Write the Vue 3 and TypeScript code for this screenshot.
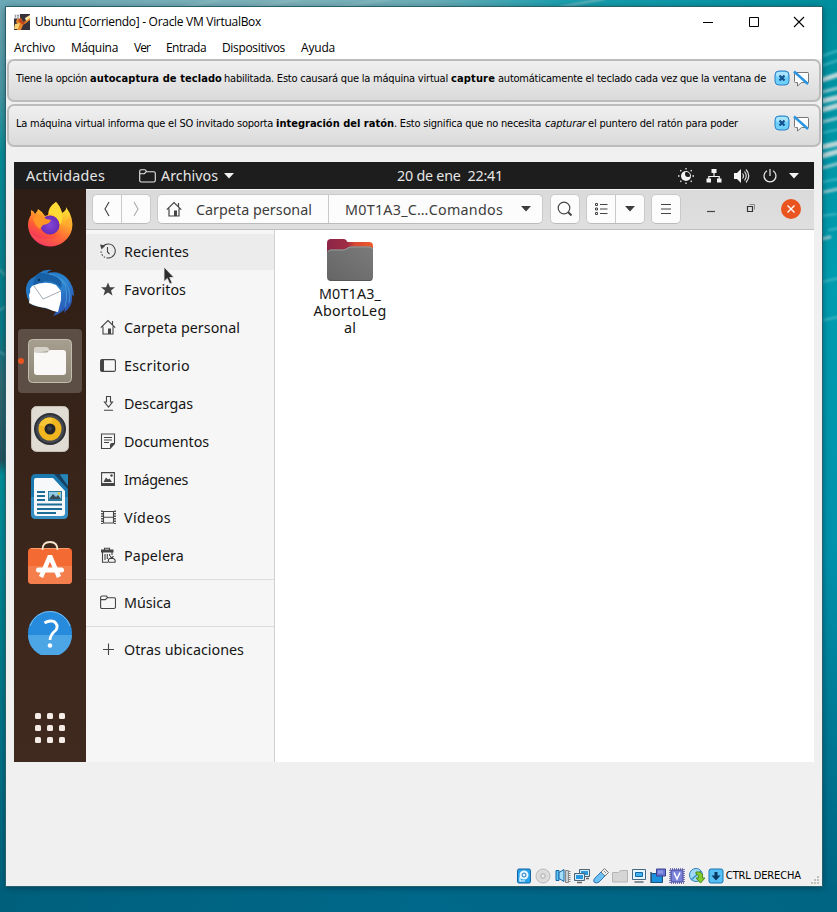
<script setup lang="ts">
import type { Directive } from 'vue'

// Spreads the letters of a label evenly over its nominal width.
const vFit: Directive<HTMLElement, number> = {
  mounted(el, binding) {
    const natural = el.getBoundingClientRect().width
    const count = (el.textContent ?? '').length
    if (count > 0) el.style.letterSpacing = `${(binding.value - natural) / count}px`
    el.style.width = `${binding.value}px`
  },
}

interface Label { text: string; width: number }
interface Segment extends Label { kind?: 'bold' | 'ital'; gap: number }
interface Place extends Label { icon: string; active?: boolean }

const menus: Label[] = [
  { text: 'Archivo', width: 41 },
  { text: 'Máquina', width: 47 },
  { text: 'Ver', width: 16 },
  { text: 'Entrada', width: 40 },
  { text: 'Dispositivos', width: 63 },
  { text: 'Ayuda', width: 34 },
]

const notices: Segment[][] = [
  [
    { text: 'Tiene la opción', width: 71, gap: 0 },
    { text: 'autocaptura de teclado', width: 132, gap: 3, kind: 'bold' },
    { text: 'habilitada. Esto causará que la máquina virtual', width: 224, gap: 2 },
    { text: 'capture', width: 44, gap: 3, kind: 'bold' },
    { text: 'automáticamente el teclado cada vez que la ventana de', width: 268, gap: 3 },
  ],
  [
    { text: 'La máquina virtual informa que el SO invitado soporta', width: 257, gap: 0 },
    { text: 'integración del ratón', width: 118, gap: 3, kind: 'bold' },
    { text: '. Esto significa que no necesita', width: 147, gap: 0 },
    { text: 'capturar', width: 41, gap: 4, kind: 'ital' },
    { text: 'el puntero del ratón para poder', width: 150, gap: 2 },
  ],
]

const groups: Place[][] = [
  [
    { text: 'Recientes', width: 65, icon: 'recent', active: true },
    { text: 'Favoritos', width: 62, icon: 'star' },
    { text: 'Carpeta personal', width: 116, icon: 'home' },
    { text: 'Escritorio', width: 66, icon: 'desktop' },
    { text: 'Descargas', width: 69, icon: 'download' },
    { text: 'Documentos', width: 85, icon: 'document' },
    { text: 'Imágenes', width: 64, icon: 'image' },
    { text: 'Vídeos', width: 47, icon: 'video' },
    { text: 'Papelera', width: 60, icon: 'trash' },
  ],
  [{ text: 'Música', width: 47, icon: 'folder' }],
  [{ text: 'Otras ubicaciones', width: 120, icon: 'plus' }],
]

const folderLines: Label[] = [
  { text: 'M0T1A3_', width: 62 },
  { text: 'AbortoLeg', width: 73 },
  { text: 'al', width: 12 },
]
</script>

<template>
  <div class="desktop">
    <svg class="wallpaper" viewBox="0 0 837 912" preserveAspectRatio="none">
      <defs>
        <linearGradient id="wl" x1="0" y1="0" x2="0" y2="1">
          <stop offset="0" stop-color="#70a9b5" /><stop offset=".1" stop-color="#4a98a4" />
          <stop offset=".17" stop-color="#078f99" /><stop offset=".36" stop-color="#087b89" />
          <stop offset=".42" stop-color="#2f6b74" /><stop offset=".505" stop-color="#225660" />
          <stop offset=".52" stop-color="#00929b" /><stop offset=".75" stop-color="#007a8a" />
          <stop offset="1" stop-color="#00617e" />
        </linearGradient>
        <linearGradient id="wr" x1="0" y1="0" x2="0" y2="1">
          <stop offset="0" stop-color="#008d9c" /><stop offset=".3" stop-color="#009caf" />
          <stop offset=".6" stop-color="#0092ab" /><stop offset=".82" stop-color="#007692" />
          <stop offset="1" stop-color="#006381" />
        </linearGradient>
        <linearGradient id="wt" x1="0" y1="0" x2="1" y2="0">
          <stop offset="0" stop-color="#6aa9b6" /><stop offset=".35" stop-color="#7fb3bb" />
          <stop offset=".52" stop-color="#69adb7" /><stop offset=".68" stop-color="#189fae" />
          <stop offset="1" stop-color="#008f9e" />
        </linearGradient>
        <linearGradient id="wb" x1="0" y1="0" x2="1" y2="0">
          <stop offset="0" stop-color="#00607c" /><stop offset=".5" stop-color="#00688a" />
          <stop offset="1" stop-color="#006583" />
        </linearGradient>
        <filter id="soft" filterUnits="userSpaceOnUse" x="-10" y="-10" width="860" height="930"><feGaussianBlur stdDeviation="1.3" /></filter>
      </defs>
      <rect width="420" height="912" fill="url(#wl)" />
      <rect x="420" width="417" height="912" fill="url(#wr)" />
      <rect width="837" height="8" fill="url(#wt)" />
      <rect y="885" width="837" height="27" fill="url(#wb)" />
      <g fill="none" filter="url(#soft)" stroke-linecap="round">
        <path stroke="#91bec4" stroke-width="1.5" d="M180 8l40-8M250 8l50-9M330 8l60-9M560 7l44-8" />
        <path stroke="#3fb6c3" stroke-width="2" d="M822 56l18-6M821 66l18-6M822 133l18-4M822 182l16-3M822 216l14-2M829 230l10-2M822 282l17-4M824 320l14-3" />
        <path stroke="#b9d6d9" stroke-width="5" d="M822 80l18-6M822 101l18-4M822 110l18-5M822 147l18-4M822 156l18-5" />
        <path stroke="#8fc6cd" stroke-width="3" d="M822 92l16-4M822 122l16-4M822 168l18-5M824 192l14-3M822 239l8-2" />
        <path stroke="#4c9da5" stroke-width="2" d="M0 270l5 5M0 310l5-3M0 352l5 3" />
      </g>
    </svg>

    <main class="window">
      <header class="titlebar">
        <svg class="appicon" width="16" height="16" viewBox="0 0 16 16">
          <rect width="16" height="16" fill="#36313b" />
          <path d="M3 5l4-1 2 4 3-1 2-4 2-1v4l-4 3-3 2-2 5H3l2-5-3-3z" fill="#e8872a" />
          <path d="M1 10l5-1-2 6H0z" fill="#f9d172" /><path d="M6 3l3 5 3-1-3 4-5-4z" fill="#c0461b" />
          <path d="M11 4l5-3v3l-4 3z" fill="#fce3a0" />
          <path d="M0 0h6v4.500H0z" fill="#e7e8ea" /><path d="M1.500 1v2.500M3 1.500h2M3 3h2" stroke="#777" stroke-width=".7" fill="none" />
        </svg>
        <span v-fit="226" class="fit title">Ubuntu [Corriendo] - Oracle VM VirtualBox</span>
        <div class="captions">
          <svg width="12" height="12" viewBox="0 0 12 12"><path d="M1 6.500h10" stroke="#000" /></svg>
          <svg width="12" height="12" viewBox="0 0 12 12"><path d="M1.500 1.500h9v9h-9z" stroke="#000" fill="none" /></svg>
          <svg width="12" height="12" viewBox="0 0 12 12"><path d="M1 1l10 10M11 1L1 11" stroke="#000" stroke-width="1.100" /></svg>
        </div>
      </header>
      <nav class="menubar">
        <span v-for="m in menus" :key="m.text" v-fit="m.width" class="fit">{{ m.text }}</span>
      </nav>

      <section class="notices">
        <article v-for="(line, i) in notices" :key="i" class="notice">
          <p>
            <span
              v-for="s in line" :key="s.text" v-fit="s.width"
              class="fit" :class="[s.kind, `gap${s.gap}`]"
            >{{ s.text }}</span>
          </p>
          <svg width="36" height="18" viewBox="0 0 36 18">
            <rect x="1" y="1" width="14" height="14" rx="4" fill="#6fd0fa" stroke="#2a7fc4" />
            <rect x="2" y="2" width="12" height="5" rx="3" fill="#a8e5fd" />
            <path d="M5.500 5.500l5 5M10.500 5.500l-5 5" stroke="#14508c" stroke-width="2.200" />
            <path d="M20.500 2.500h13.500q.5 0 .5 1v9h-7l-4 3.500v-3.500h-2q-1 0-1-1z" fill="#fff" stroke="#777" />
            <path d="M20 1.500l14 12.500" stroke="#2b94e0" stroke-width="2.400" />
          </svg>
        </article>
      </section>

      <section class="guest">
        <header class="topbar">
          <span v-fit="79" class="fit act">Actividades</span>
          <svg width="17" height="14" viewBox="0 0 17 14"><path d="M.7 2.200Q.7.7 2.200.7h3.600q1 0 1.300 1.200.2.800 1 .8h6.700q1.500 0 1.500 1.500v7.300q0 1.500-1.500 1.500H2.200q-1.500 0-1.500-1.500zM.7 4.700h4.600l2-2" fill="none" stroke="#e8e8e8" stroke-width="1.100" /></svg>
          <span v-fit="57" class="fit files">Archivos</span>
          <svg class="dd" width="10" height="6" viewBox="0 0 10 6"><path d="M0 0h10L5 5.500z" fill="#f2f2f2" /></svg>
          <span v-fit="106" class="fit clock">20 de ene&nbsp; 22:41</span>
          <div class="tray">
            <svg width="16" height="16" viewBox="0 0 16 16">
              <circle cx="8" cy="8" r="5" fill="#f4f4f4" /><circle cx="10" cy="6" r="3" fill="#1d1d1d" />
              <path d="M8 3.400A4.600 4.600 0 0 1 12.600 8" fill="none" stroke="#eee" />
              <path d="M8 0v1.500M8 14.500v1.500M0 8h1.500M14.500 8h1.500M2.300 2.300l1 1M12.700 12.700l1 1M2.300 13.700l1-1M12.700 3.300l1-1" stroke="#eee" stroke-width="1.300" />
            </svg>
            <svg width="16" height="16" viewBox="0 0 16 16"><path d="M5.500 1h5v4h-5zM.5 10.500h4.500v4H.5zM11 10.500h4.500v4H11z" fill="#f4f4f4" /><path d="M8 4v4.500M2.800 11V8.500h10.400v2.500" fill="none" stroke="#f4f4f4" stroke-width="1.200" /></svg>
            <svg width="16" height="16" viewBox="0 0 16 16"><path d="M0 5h3l4-4v14l-4-4H0z" fill="#f4f4f4" /><path d="M8.500 5.500Q10.500 8 8.500 10.500M10.500 3.500Q14 8 10.500 12.500M12 1.500q5.500 6.500 0 13" fill="none" stroke="#ddd" stroke-width="1.200" /></svg>
            <svg width="16" height="16" viewBox="0 0 16 16"><path d="M5 2.700a6 6 0 1 0 6 0M8 1v7" fill="none" stroke="#eee" stroke-width="1.200" /></svg>
            <svg width="10" height="6" viewBox="0 0 10 6"><path d="M0 0h10L5 5.500z" fill="#f2f2f2" /></svg>
          </div>
        </header>

        <div class="session">
          <aside class="dock">
            <div class="slot">
              <svg width="48" height="48" viewBox="0 0 48 48">
                <defs>
                  <linearGradient id="ff" x1=".8" y1="0" x2=".3" y2="1"><stop offset="0" stop-color="#fff03d" /><stop offset=".38" stop-color="#ffb02a" /><stop offset=".65" stop-color="#ff6034" /><stop offset="1" stop-color="#f0226e" /></linearGradient>
                  <radialGradient id="fp"><stop offset="0" stop-color="#8346d8" /><stop offset="1" stop-color="#6a2bb8" /></radialGradient>
                </defs>
                <path d="M30 1Q34 5 36 12Q41 9 40 6Q48 17 46 28A22.300 22.300 0 0 1 2 25Q2 18 5 14V9Q8 10 9 13Q12 10 12 8Q17 11 19 15L22 14Q22 6 30 1z" fill="url(#ff)" />
                <path d="M46 28A22.300 22.300 0 0 1 3 29Q8 38 20 38Q37 38 39 22L44 14Q47 21 46 28z" fill="#ff8a3c" opacity=".25" />
                <circle cx="24" cy="24" r="9.500" fill="url(#fp)" />
                <path d="M7 17Q14 11 20 18L25 19Q24 23 17 24L14 28Q9 25 7 17z" fill="#ff9427" />
                <path d="M30 1Q23 6 23 13Q32 14 34 24Q38 17 36 12Q34 5 30 1z" fill="#ffda35" />
              </svg>
            </div>
            <div class="slot">
              <svg width="50" height="48" viewBox="0 0 50 48">
                <defs><linearGradient id="tb" x1="0" y1="0" x2="1" y2="1"><stop offset="0" stop-color="#1d6fbd" /><stop offset=".55" stop-color="#2b84d0" /><stop offset="1" stop-color="#2a3fa6" /></linearGradient></defs>
                <path d="M14 4Q20 0 27 1Q23 2 22 4Q34 1 42 9Q49 17 49 27L47 26Q48 35 43 40L39 44 40 40Q35 45 28 47Q31 44 31 42L7 36Q0 28 1 19Q2 11 9 8z" fill="url(#tb)" />
                <path d="M14 4Q8 10 8 17L20 12Q30 12 36 19Q38 12 32 8Q24 4 14 4z" fill="#1860a6" />
                <path d="M38 12Q44 22 40 38M33 8Q48 16 44 34M24 5Q34 6 39 15" fill="none" stroke="#4297d4" />
                <path d="M7 17Q20 11 31 16L36 22 36 31 33 43Q27 42 21 39Q11 38 4 34Q5 30 4 26Q6 23 5 20z" fill="#fff" />
                <path d="M9 17l9 13 18-8" stroke="#9aa1ad" stroke-width=".9" fill="none" />
                <circle cx="14" cy="11" r="1.200" fill="#0b315c" />
              </svg>
            </div>
            <div class="slot current">
              <i class="dot"></i>
              <svg width="44" height="44" viewBox="0 0 44 44">
                <defs><linearGradient id="fl" x1="0" y1="0" x2="0" y2="1"><stop offset="0" stop-color="#a69f8f" /><stop offset="1" stop-color="#8f8776" /></linearGradient></defs>
                <rect x=".5" y=".5" width="43" height="43" rx="4" fill="url(#fl)" stroke="#c4bdae" />
                <path d="M6 14V10Q6 8 8 8h10q2 0 3 2v2z" fill="#d8d3ca" />
                <path d="M6 13.500h12q2 0 2.500-1.500.5-1 2.500-1h12q3 0 3 3v19q0 3-3 3H9q-3 0-3-3z" fill="#f9f8f6" />
              </svg>
            </div>
            <div class="slot">
              <svg width="38" height="46" viewBox="0 0 38 46">
                <rect x=".5" y=".5" width="37" height="45" rx="5" fill="#e0dbd3" stroke="#c4beb5" />
                <circle cx="19" cy="23" r="16" fill="#2d3037" /><circle cx="19" cy="23" r="14" fill="#454952" /><circle cx="19" cy="23" r="11.500" fill="#f0b51f" />
                <path d="M19 23L8 19A11.500 11.500 0 0 1 22 12z" fill="#f8c535" /><circle cx="19" cy="23" r="5.500" fill="#24262b" /><circle cx="18.500" cy="22.500" r="2.300" fill="#3d4149" />
              </svg>
            </div>
            <div class="slot">
              <svg width="38" height="46" viewBox="0 0 38 46">
                <path d="M5 0h31q1 0 1 1v39q0 5-5 5H5q-5 0-5-5V5q0-5 5-5z" fill="#1b79ae" /><path d="M0 23h37v17q0 5-5 5H5q-5 0-5-5z" fill="#358fc2" />
                <path d="M5 4h17l12 13v22q0 3-3 3H6q-3 0-3-3V6q0-2 2-2z" fill="#f6f8fa" /><path d="M23 0h6l8 10v5z" fill="#173e5d" /><path d="M29 1h8v11z" fill="#2586b7" />
                <path d="M6 18h8M6 22h8M6 26h8M6 30.500h25M6 35h25M6 39h19" stroke="#1b6c96" stroke-width="2" />
                <path d="M17 17h14v10H17z" fill="#2b789d" /><path d="M18 18h12v7H18z" fill="#90cbe7" /><path d="M18 25l4-5 3 3 2-2 3 4z" fill="#384b56" /><circle cx="28" cy="19.500" r="1.300" fill="#e4c52c" />
              </svg>
            </div>
            <div class="slot store">
              <svg width="44" height="44" viewBox="0 0 44 44">
                <rect y="7" width="44" height="36" rx="4" fill="#f46a33" /><path d="M0 25h44v14q0 4-4 4H4q-4 0-4-4z" fill="#f57f4c" /><path d="M3 7.500h38" stroke="#ff9c6b" />
                <path d="M13 36L22 15L31 36" fill="none" stroke="#fff" stroke-width="4.500" stroke-linejoin="bevel" /><rect x="8" y="26.500" width="28" height="5" rx="2.500" fill="#fff" />
                <path d="M14.500 9Q14.500 1 22 1t7.500 8" fill="none" stroke="#f5e6cd" stroke-width="1.800" />
              </svg>
            </div>
            <div class="slot help">
              <svg width="44" height="44" viewBox="0 0 44 44">
                <circle cx="22" cy="22" r="22" fill="#278bdd" /><path d="M0 24h44A22 22 0 0 1 0 24z" fill="#4ca5e5" /><path d="M2 15A21 21 0 0 1 42 15" fill="none" stroke="#75bcf0" />
                <path d="M16.500 12Q21 9 26 10.500Q31 14 28 19Q22 24 22 29" fill="none" stroke="#fff" stroke-width="2.800" /><circle cx="22" cy="34.500" r="2.300" fill="#fff" />
              </svg>
            </div>
            <div class="apps"><i v-for="n in 9" :key="n"></i></div>
          </aside>

          <section class="files-window">
            <header class="headerbar">
              <div class="btns nav">
                <button><svg width="16" height="16" viewBox="0 0 16 16"><path d="M10 1L6 8l4 7" fill="none" stroke="#3c3c3c" stroke-width="1.100" /></svg></button>
                <button><svg width="16" height="16" viewBox="0 0 16 16"><path d="M6 1l4 7-4 7" fill="none" stroke="#aaa" stroke-width="1.100" /></svg></button>
              </div>
              <div class="btns path">
                <button class="crumb">
                  <svg width="16" height="16" viewBox="0 0 16 16"><path d="M.8 8.700L8 1.500l7.200 7.200M3 7.500v7.500h10V7.500M12.500 2v3.500" fill="none" stroke="#444" stroke-width="1.200" /><path d="M8 9.500h3V15H8z" fill="#444" /></svg>
                  <span v-fit="116" class="fit">Carpeta personal</span>
                </button>
                <button class="crumb last">
                  <span v-fit="158" class="fit">M0T1A3_C…Comandos</span>
                  <svg width="10" height="6" viewBox="0 0 10 6"><path d="M0 0h10L5 5.500z" fill="#3c3c3c" /></svg>
                </button>
              </div>
              <div class="btns one"><button><svg width="16" height="16" viewBox="0 0 16 16"><circle cx="7" cy="7" r="5.800" fill="none" stroke="#444" stroke-width="1.200" /><path d="M11 11l3.500 3.500" stroke="#444" stroke-width="2" /></svg></button></div>
              <div class="btns view">
                <button><svg width="16" height="16" viewBox="0 0 16 16"><path d="M2.500 2.500h2v2h-2zM2.500 7h2v2h-2zM2.500 11.500h2v2h-2z" fill="none" stroke="#444" /><path d="M7 3.500h7.500M7 8h7.500M7 12.500h7.500" stroke="#444" stroke-width="1.200" /></svg></button>
                <button><svg width="10" height="6" viewBox="0 0 10 6"><path d="M0 0h10L5 5.500z" fill="#3c3c3c" /></svg></button>
              </div>
              <div class="btns one"><button><svg width="16" height="16" viewBox="0 0 16 16"><path d="M3 3.500h10M3 8h10M3 12.500h10" stroke="#444" stroke-width="1.100" /></svg></button></div>
              <div class="winctl">
                <svg width="16" height="16" viewBox="0 0 16 16"><path d="M4 10.500h8" stroke="#444" stroke-width="1.200" /></svg>
                <svg width="16" height="16" viewBox="0 0 16 16"><path d="M4.500 5.500h5v5h-5z" fill="none" stroke="#333" stroke-width="1.200" /><path d="M6.500 3.500h5v5" fill="none" stroke="#888" /></svg>
                <svg width="20" height="20" viewBox="0 0 20 20"><circle cx="10" cy="10" r="10" fill="#e9541f" /><path d="M6.500 6.500l7 7M13.500 6.500l-7 7" stroke="#fff" stroke-width="1.400" /></svg>
              </div>
            </header>
            <div class="body">
              <aside class="places">
                <ul v-for="(g, gi) in groups" :key="gi">
                  <li v-for="p in g" :key="p.text" :class="{ active: p.active }">
                    <svg width="16" height="16" viewBox="0 0 16 16" fill="none" stroke="#444" stroke-width="1.100">
                      <g v-if="p.icon === 'recent'"><path d="M2.500 4A7 7 0 1 1 8 15M7.500 4v5l2 2" /><path d="M8 15A7 7 0 0 1 1 8" stroke-dasharray="1.500 1.500" /><path d="M0 1.500l5.500 1-4 4z" fill="#444" stroke="none" /></g>
                      <path v-else-if="p.icon === 'star'" d="M8 1.500l2 4.800h5l-4 3.200 1.500 5L8 11.500l-4.500 3 1.500-5-4-3.200h5z" fill="#444" stroke="none" />
                      <g v-else-if="p.icon === 'home'"><path d="M.8 8.700L8 1.500l7.200 7.200M3 7.500v7.500h10V7.500M12.500 2v3.500" /><path d="M8 9.500h3V15H8z" fill="#444" stroke="none" /></g>
                      <g v-else-if="p.icon === 'desktop'"><rect x=".6" y="2.600" width="14.800" height="11.800" rx="1.500" /><path d="M.5 4q0-1.500 1.500-1.500h2v12H2Q.5 14.500.5 13z" fill="#444" stroke="none" /></g>
                      <path v-else-if="p.icon === 'download'" d="M6.500 1.500h4v5.500h2L8.500 12 4.500 7h2zM4 15.300h9" />
                      <g v-else-if="p.icon === 'document'"><path d="M1.500 1h13v9.500L10 15.500H1.500z" /><path d="M4 4.500h8M4 7h8M4 9.500h5" /><path d="M14.500 10v1L10 15.500V12q0-2 2-2z" fill="#444" stroke="none" /></g>
                      <g v-else-if="p.icon === 'image'"><path d="M1.600 1.600h12.800v12.800H1.600z" /><path d="M1 12h14v3H1zM3.500 11l2.500-4.500 2 2 1.500-1L12 11z" fill="#444" stroke="none" /><circle cx="11.500" cy="4.500" r="1.200" fill="#444" stroke="none" /></g>
                      <g v-else-if="p.icon === 'video'"><path d="M3.500 2.500h10v11.500h-10zM3.500 8.200h10" /><path d="M2 1.500v13.500M15 1.500v13.500" stroke-width="1.800" stroke-dasharray="1.500 1" /></g>
                      <g v-else-if="p.icon === 'trash'"><path d="M4.500 3V1.200h5V3" /><path d="M1 2.500h12.500v3H1z" fill="#444" stroke="none" /><path d="M2.500 5v10.300h5.500M12 5v3M5 7v6M7.300 7v5M9.600 7v2" /><path d="M9 15.300q-1.500-2.300.5-3.800l3.500-.3q3 1.300 2 4.100zM10.300 9l1.200 2.200L13.500 9" fill="#f6f6f6" /></g>
                      <path v-else-if="p.icon === 'folder'" d="M.6 3.500q0-1.500 1.500-1.500h3.800q1 0 1.300 1 .2.800 1 .8h5.800q1.500 0 1.500 1.500v7.700q0 1.500-1.500 1.500h-12q-1.400 0-1.400-1.500zM.6 5.600h4.800l1.800-1.800" />
                      <path v-else d="M8.500 2.500v11.500M3 8.500h11" />
                    </svg>
                    <span v-fit="p.width" class="fit">{{ p.text }}</span>
                  </li>
                </ul>
              </aside>
              <div class="canvas">
                <figure>
                  <svg width="46" height="42" viewBox="0 0 46 42">
                    <defs><linearGradient id="fb" x1="0" y1="0" x2="1" y2="0"><stop offset="0" stop-color="#8b2547" /><stop offset=".45" stop-color="#a02c44" /><stop offset=".6" stop-color="#d84734" /><stop offset="1" stop-color="#ee5a2b" /></linearGradient><linearGradient id="fg" x1="0" y1="1" x2="1" y2="0"><stop offset="0" stop-color="#656565" /><stop offset="1" stop-color="#7b7b7b" /></linearGradient></defs>
                    <path d="M0 4Q0 0 4 0h13q2 0 3.500 3H42q4 0 4 4v20H0z" fill="url(#fb)" />
                    <path d="M0 14q0-3.500 4-3.500h12q2 0 4-1.500t4-1.500h18q4 0 4 3.500v27q0 4-4 4H4q-4 0-4-4z" fill="url(#fg)" /><path d="M1 13q1-2 3-2h12q2 0 4-1.500t4-1.500h18q3 0 3.500 2" fill="none" stroke="#999" /><path d="M2 40.500q1 1 3 1h37q2 0 3-1" fill="none" stroke="#555" />
                  </svg>
                  <figcaption><span v-for="l in folderLines" :key="l.text" v-fit="l.width" class="fit">{{ l.text }}</span></figcaption>
                </figure>
              </div>
            </div>
          </section>
        </div>
        <svg class="pointer" width="14" height="20" viewBox="0 0 14 20"><path d="M1 1v14.500l3.300-3 2.500 5.500 2.400-1-2.500-5.500H11z" fill="#2d2d2d" stroke="#eee" stroke-width=".8" /></svg>
      </section>

      <footer class="statusbar">
        <svg viewBox="0 0 16 16"><rect x="1.500" y="1" width="13" height="14" rx="1.500" fill="#28a2ea" stroke="#1164a5" /><circle cx="8" cy="7" r="4.500" fill="#e7f6ff" /><circle cx="8" cy="7" r="2" fill="none" stroke="#1976ba" /><path d="M4 9v4h5" stroke="#fff" fill="none" stroke-width="1.200" /></svg>
        <svg viewBox="0 0 16 16"><circle cx="8" cy="8" r="7" fill="#dcdcdc" stroke="#bbb" /><circle cx="8" cy="8" r="2.200" fill="#eee" stroke="#aaa" /></svg>
        <svg viewBox="0 0 16 16"><path d="M1 2.500h3v10H1z" fill="#5cc4f4" stroke="#1464a4" /><path d="M4 4.500l5-3v12l-5-3z" fill="#a4defa" stroke="#1464a4" /><path d="M10.500 2.500h3v12h-3z" fill="#c8cfd3" stroke="#888" /><path d="M14.800 3v12" stroke="#888" stroke-width="1.500" stroke-dasharray="1 1" /></svg>
        <svg viewBox="0 0 16 16"><path d="M5.500 1.500h10v7h-10z" fill="#2998dd" stroke="#4f6474" /><path d="M6.500 2.500h8v5h-8z" stroke="#def" fill="none" /><path d="M.5 5.500h10v7H.5z" fill="#2998dd" stroke="#4f6474" /><path d="M1.500 6.500h8v5h-8z" stroke="#def" fill="none" /><path d="M3 14.500h5M12 10.500h3" stroke="#666" stroke-width="1.500" /></svg>
        <svg viewBox="0 0 16 16"><path d="M1 14q-1-2 1-4l6-6 4 4-6 6q-3 2-5 0z" fill="#6fc0f4" stroke="#2874b2" /><path d="M8 4l3.500-3.500 4 4L12 8z" fill="#eceff1" stroke="#777" /><path d="M11 3l2 2" stroke="#555" stroke-dasharray="1 1" /></svg>
        <svg viewBox="0 0 16 16"><path d="M.5 4.500h6l2-2h7v11.500H.5z" fill="#d5d5d5" stroke="#b4b4b4" /></svg>
        <svg viewBox="0 0 16 16"><path d="M1.500 1.500h13v10h-13z" fill="#e4f6ff" stroke="#45677f" /><path d="M4.500 4.500h7v4h-7z" fill="#43b3f0" stroke="#1265a3" /><path d="M3.500 14h9" stroke="#6b7780" stroke-width="1.600" /></svg>
        <svg viewBox="0 0 16 16"><path d="M1.500 5.500h11v9h-11z" fill="#1a91dc" stroke="#18527e" /><path d="M1 4v11" stroke="#315876" stroke-width="1.500" /><path d="M6.500 1h9v7h-9z" fill="#6a75d3" stroke="#383e91" /><path d="M8 2.500h5v3H8z" fill="#8c96e4" /></svg>
        <svg viewBox="0 0 16 16"><rect x="1" y="1" width="14" height="14" fill="none" stroke="#504f9c" stroke-width="1.400" stroke-dasharray="1 1" /><rect x="2" y="2" width="12" height="12" rx="1" fill="#7a83d8" stroke="#424599" /><path d="M5 4.500L8 11l3-6.500" fill="none" stroke="#fff" stroke-width="1.500" /></svg>
        <svg viewBox="0 0 16 16"><circle cx="7" cy="7" r="6.500" fill="#a2daf5" stroke="#307fb5" /><path d="M2 12L12 3" stroke="#338fc8" stroke-width="1.500" /><path d="M7 4h4q4 2 2.500 6H16l-4.500 5L7 10h2.500q1-3-2.500-4z" fill="#86ca31" stroke="#488d18" /></svg>
        <svg viewBox="0 0 16 16"><rect x="1" y="1" width="14" height="14" rx="2" fill="#56c0f5" stroke="#1775b5" /><path d="M8 4v4" stroke="#083a65" stroke-width="3" /><path d="M3.500 7.500h9L8 12.500z" fill="#083a65" /></svg>
        <span v-fit="75" class="fit host">CTRL DERECHA</span>
        <svg class="grip" viewBox="0 0 9 9"><path d="M6 0h2v2H6zM3 3h2v2H3zM6 3h2v2H6zM0 6h2v2H0zM3 6h2v2H3zM6 6h2v2H6z" fill="#c2c2ba" /></svg>
      </footer>
    </main>
  </div>
</template>

<style>
body { margin: 0; overflow: hidden; }
</style>

<style scoped>
.desktop { position: relative; box-sizing: border-box; width: 837px; height: 912px; padding: 7px 15px 26px 6px; overflow: hidden; background: #006583; }
.wallpaper { position: absolute; inset: 0; width: 837px; height: 912px; }
.desktop svg { flex: none; display: block; }
.fit { display: inline-block; flex: none; white-space: nowrap; }
.window { position: relative; display: flex; flex-direction: column; width: 816px; height: 879px; background: #f0f0f0; box-shadow: 0 0 0 1px #27616b, 0 1px 7px rgba(0, 25, 40, .55); }
.titlebar { display: flex; align-items: center; height: 29px; padding: 0 17px 0 8px; background: #fff; font: 12px/20px "Open Sans", sans-serif; color: #000; }
.title { margin-left: 5px; }
.captions { display: flex; gap: 33.500px; margin-left: auto; }
.menubar { display: flex; gap: 16px; height: 23px; padding-left: 8px; background: #fff; font: 12px/24px "Open Sans", sans-serif; color: #000; }
.notices { display: flex; flex-direction: column; gap: 2px; padding: 0 1px 0 1px; }
.notice { display: flex; align-items: flex-start; justify-content: space-between; box-sizing: border-box; height: 43px; padding: 8px 9px 0 7px; border: 2px solid #bcbcbc; border-radius: 7px; background: linear-gradient(#f0f0f0, #dadada); }
.notice p { display: flex; margin: 1px 0 0; font: 11px/18px "DejaVu Sans Condensed", "DejaVu Sans", sans-serif; color: #000; }
.notice svg { margin-top: .5px; }
.notice .bold { font-weight: bold; }
.ital { font-style: italic; }
.gap2 { margin-left: 2px; }
.gap3 { margin-left: 3px; }
.gap4 { margin-left: 4px; }
.guest { position: relative; width: 800px; height: 600px; margin: 15px 0 0 8px; font-family: "Noto Sans", sans-serif; font-size: 14.300px; }
.topbar { display: flex; align-items: center; height: 27px; background: #1d1d1d; color: #e6e6e6; }
.act { margin: 0 34px 0 12px; }
.files { margin: 0 6px 0 5px; }
.clock { margin-left: 163px; }
.tray { display: flex; align-items: center; gap: 12px; margin: 0 15px 0 auto; }
.tray svg:last-child { margin-left: -1px; }
.session { display: flex; height: 573px; }
.dock { display: flex; flex-direction: column; align-items: center; flex: none; width: 72px; background: linear-gradient(#2d1d14, #3b261b 60%, #40291e); padding-top: 4px; box-sizing: border-box; }
.slot { position: relative; display: flex; align-items: center; justify-content: center; width: 64px; height: 64px; margin-bottom: 4px; border-radius: 4px; }
.current { background: #5c4e45; }
.store { box-sizing: border-box; padding-bottom: 4px; }
.help { box-sizing: border-box; padding-bottom: 1px; }
.dot { position: absolute; left: 0; top: 29px; width: 6px; height: 6px; border-radius: 3px; background: #e95420; }
.apps { display: grid; grid-template-columns: repeat(3, 6px); gap: 6px; margin-top: 44px; }
.apps i { width: 6px; height: 6px; border-radius: 1.500px; background: #f4ece6; }
.files-window { display: flex; flex-direction: column; width: 728px; background: #fff; }
.headerbar { display: flex; align-items: center; box-sizing: border-box; height: 41px; padding: 0 13px 1px 6px; border-top: 1px solid #f3f3f3; border-bottom: 1px solid #bfbfbf; background: linear-gradient(#dadada, #dfdfdf); color: #3d3d3d; }
.btns { display: flex; box-sizing: border-box; height: 30px; border: 1px solid #c9c9c9; border-bottom-color: #bbb; border-radius: 5px; background: #fcfcfc; overflow: hidden; }
.btns button { display: flex; align-items: center; justify-content: center; flex: 1; padding: 0; border: 0; background: none; font: inherit; color: inherit; }
.btns button + button { border-left: 1px solid #c9c9c9; }
.nav { width: 59px; margin-right: 6px; }
.path { width: 386px; margin-right: 7px; }
.btns .crumb { justify-content: flex-start; flex: none; width: 170px; padding-left: 8px; gap: 14px; }
.btns .last { width: 214px; padding-left: 16px; gap: 18px; }
.one { width: 30px; margin-right: 6px; }
.view { width: 59px; margin-right: 6px; }
.winctl { display: flex; align-items: center; gap: 24px; margin-left: auto; }
.winctl svg:last-child { margin-left: -2px; }
.body { display: flex; flex: 1; min-height: 0; }
.places { box-sizing: border-box; width: 189px; padding-top: 2px; border-right: 1px solid #d2d2d2; background: #f6f6f6; color: #151515; }
.places ul { margin: 0; padding: 0 0 1px; list-style: none; }
.places ul + ul { margin-top: 4px; padding-top: 3px; border-top: 1px solid #dcdcdc; }
.places li { display: flex; align-items: center; gap: 8px; height: 38px; padding-left: 14px; }
.places .active { background: #ececec; box-shadow: inset 0 2px #f6f6f6; }
.canvas { flex: 1; padding: 9px 0 0 34px; }
.canvas figure { display: flex; flex-direction: column; align-items: center; width: 82px; margin: 0; }
.canvas figcaption { display: flex; flex-direction: column; align-items: center; margin-top: 4px; line-height: 17px; color: #151515; }
.pointer { position: absolute; left: 149px; top: 104px; }
.statusbar { display: flex; align-items: center; justify-content: flex-end; gap: 3.150px; height: 18px; margin: auto 2px 1px 0; }
.statusbar svg { width: 16px; height: 16px; }
.host { margin-left: -1px; font: 11px/18px "DejaVu Sans Condensed", sans-serif; color: #000; }
.statusbar .grip { align-self: flex-end; width: 9px; height: 9px; margin-left: 7px; }
</style>
